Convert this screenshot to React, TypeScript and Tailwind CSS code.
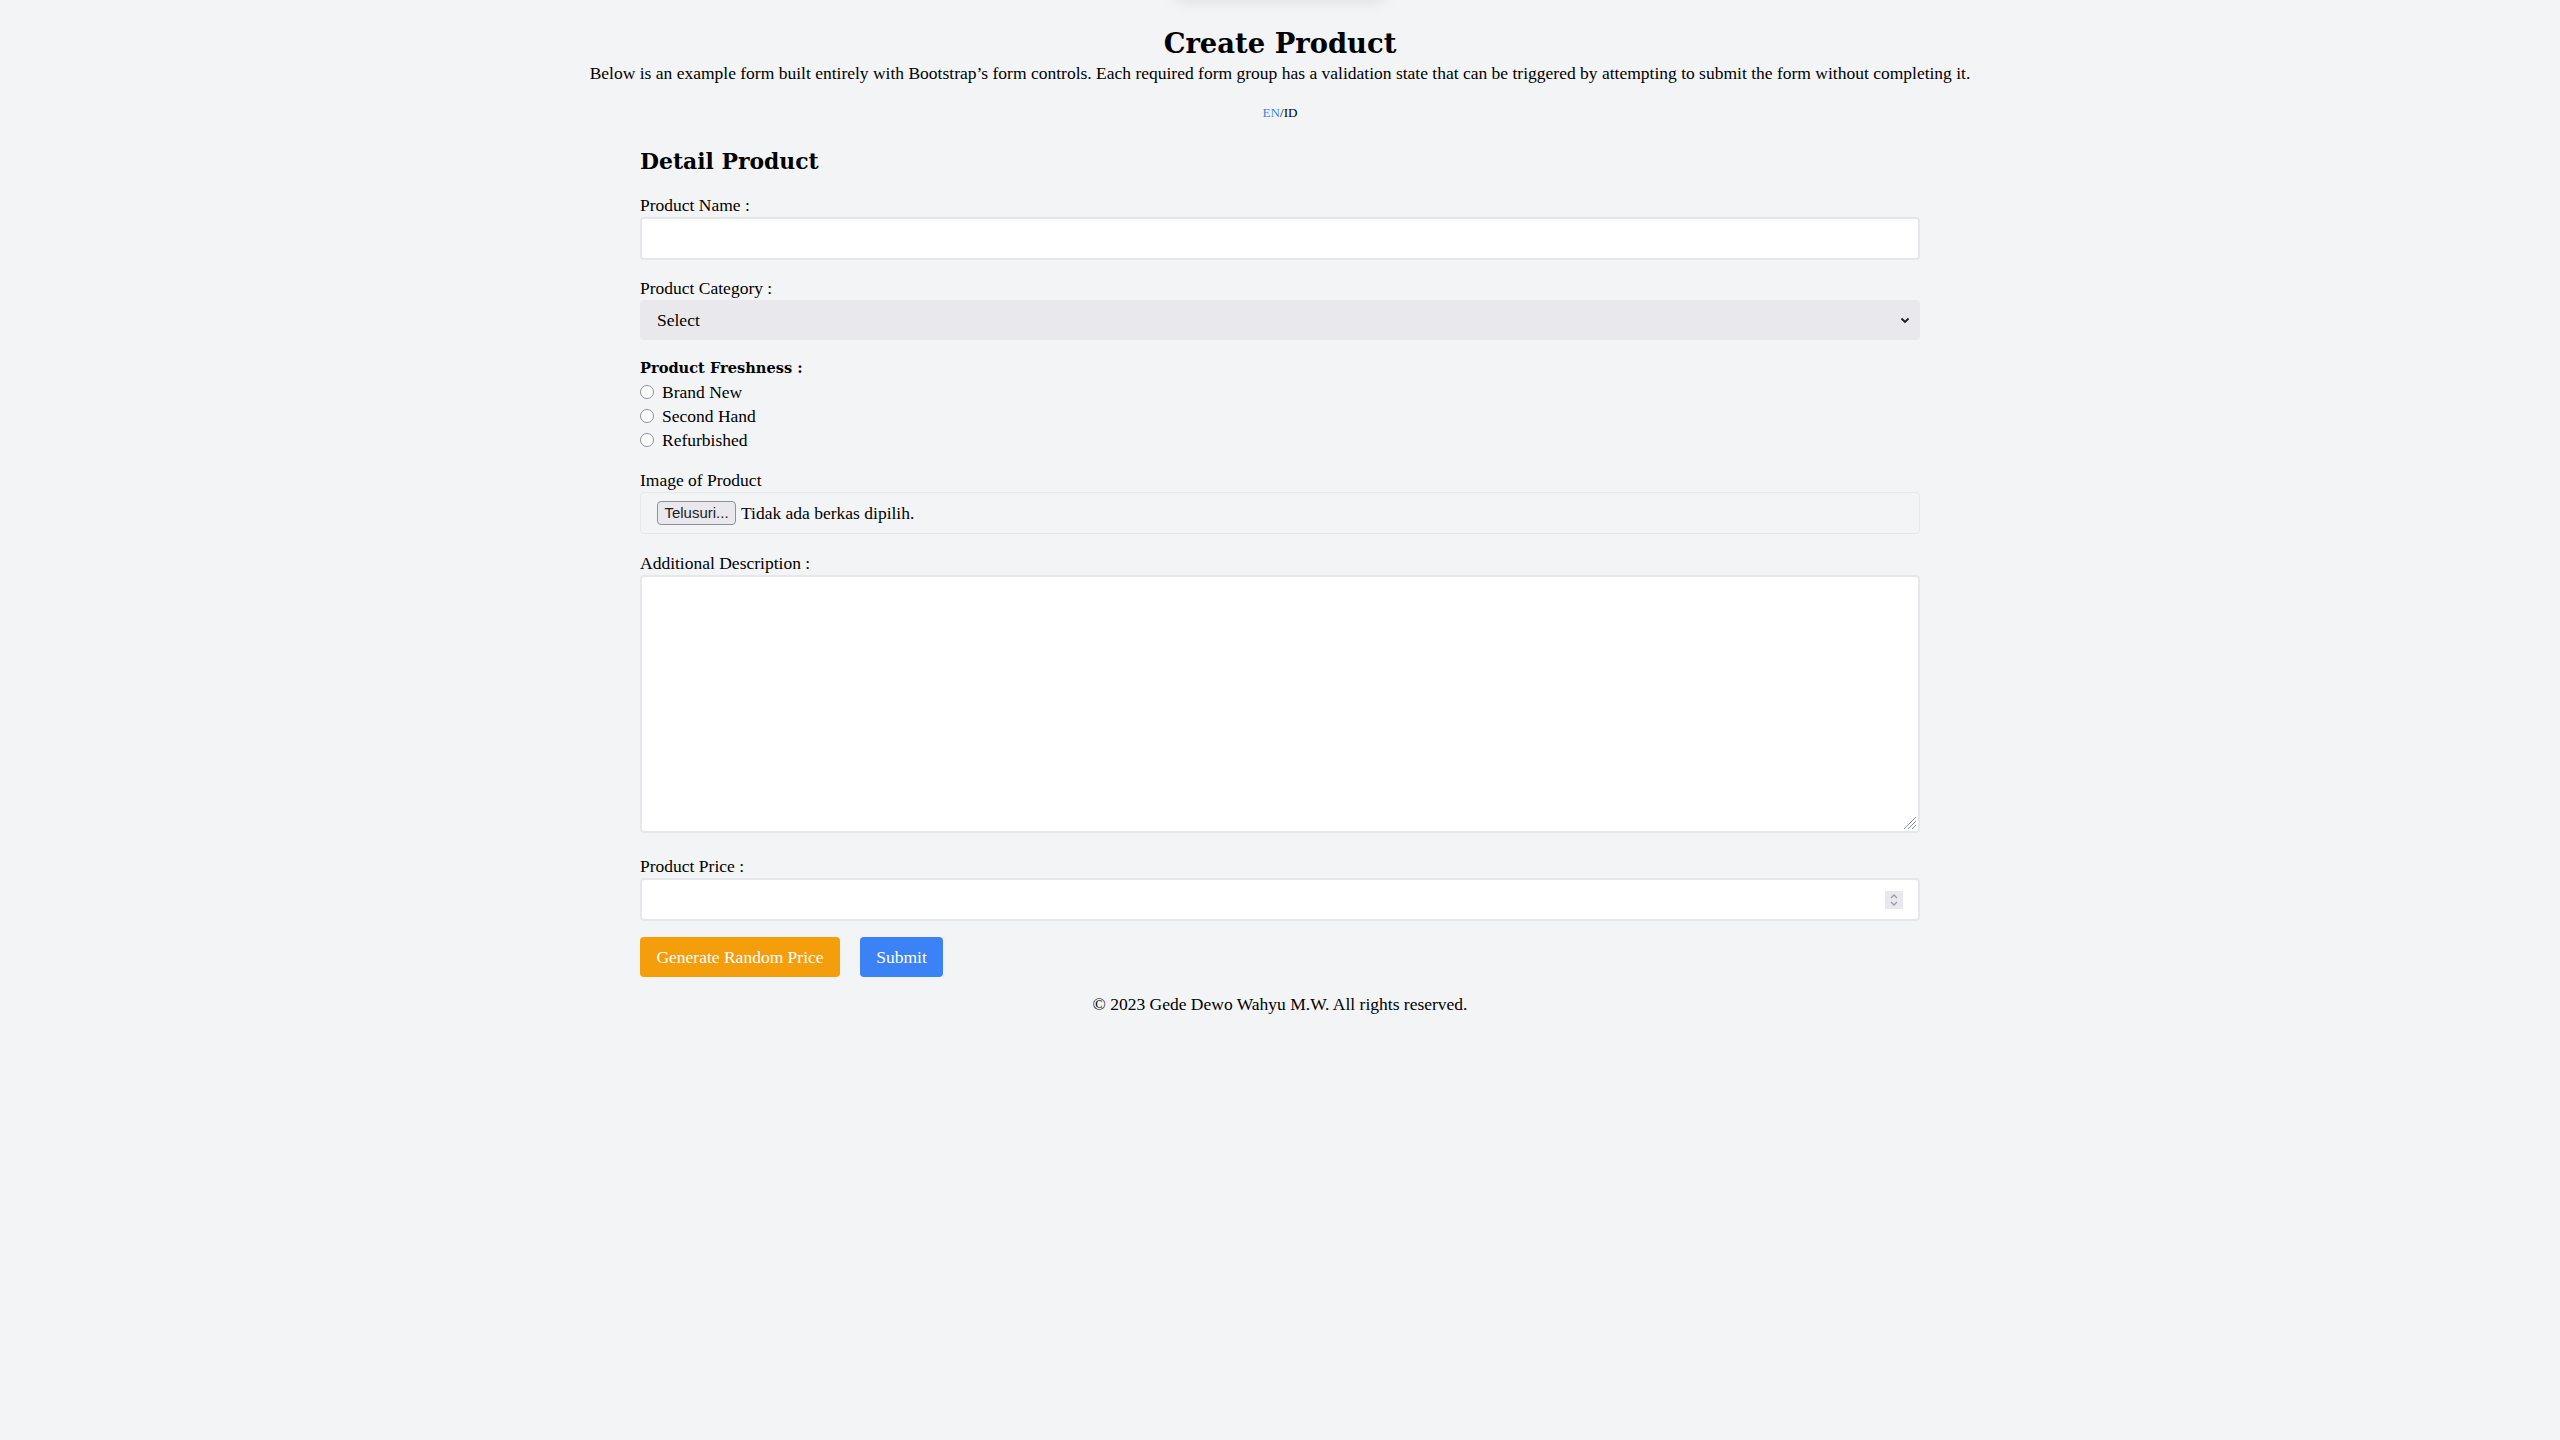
import React from 'react';

const body = "font-['Liberation_Serif',serif]";
const heading = "font-['DejaVu_Serif',serif] font-bold";

function Label({ children, bold }: { children: React.ReactNode; bold?: boolean }) {
  return (
    <div className={bold ? `${heading} text-[14.6px] leading-[24px]` : 'text-[17.5px] leading-[24px]'}>
      {children}
    </div>
  );
}

function Radio({ label }: { label: string }) {
  return (
    <label className="flex h-[24px] items-center">
      <span className="mr-[8px] h-[14px] w-[14px] rounded-full border-[1.5px] border-[#8f8f9d] bg-white" />
      <span className="text-[17.5px] leading-[24px]">{label}</span>
    </label>
  );
}

export default function App() {
  return (
    <div className={`relative min-h-screen overflow-hidden bg-[#f3f4f6] text-black ${body}`}>
      <div className="absolute left-1/2 top-[-44px] h-[44px] w-[225px] -translate-x-1/2 rounded-full bg-white shadow-[0_4px_14px_rgba(0,0,0,0.07)]" />

      <header className="pt-[25px] text-center">
        <h1 className={`${heading} text-[27.4px] leading-[36px]`}>Create Product</h1>
        <p className="text-[17.5px] leading-[24px]">
          Below is an example form built entirely with Bootstrap’s form controls. Each required form group has a
          validation state that can be triggered by attempting to submit the form without completing it.
        </p>
        <div className="mt-5 text-[13.1px] leading-[16px]">
          <a className="text-[#3b82f6]">EN</a>/<a>ID</a>
        </div>
      </header>

      <main className="mx-auto max-w-7xl">
        <h2 className={`${heading} mt-6 text-[21.9px] leading-[32px]`}>Detail Product</h2>

        <div className="mt-4">
          <Label>Product Name :</Label>
          <div className="h-[43px] w-full rounded border-2 border-[#e5e7eb] bg-white" />
        </div>

        <div className="mt-[16px]">
          <Label>Product Category :</Label>
          <div className="flex h-[40px] items-center justify-between rounded bg-[#e9e9ed] pl-[17px] pr-[9px]">
            <span className="text-[17.5px]">Select</span>
            <svg width="12" height="12" viewBox="0 0 12 12" fill="none" stroke="#1c1b22" strokeWidth="1.8">
              <path d="M2.5 4.5 6 8l3.5-3.5" />
            </svg>
          </div>
        </div>

        <div className="mt-4">
          <Label bold>Product Freshness :</Label>
          <Radio label="Brand New" />
          <Radio label="Second Hand" />
          <Radio label="Refurbished" />
        </div>

        <div className="mt-4">
          <Label>Image of Product</Label>
          <div className="flex h-[42px] items-center rounded border border-[#e5e7eb] px-4">
            <span className="flex h-[24px] w-[79px] items-center justify-center rounded-[4px] border border-[#8f8f9d] bg-[#e9e9ed] font-['Liberation_Sans',sans-serif] text-[15px] text-[#1c1b22]">
              Telusuri...
            </span>
            <span className="ml-[5px] text-[17.5px]">Tidak ada berkas dipilih.</span>
          </div>
        </div>

        <div className="mt-[17px]">
          <Label>Additional Description :</Label>
          <div className="relative h-[258px] w-full rounded border-2 border-[#e5e7eb] bg-white">
            <svg className="absolute bottom-[1px] right-[1px]" width="14" height="14" viewBox="0 0 14 14" stroke="#8f8f9d" strokeWidth="1">
              <path d="M13 1 1 13M13 5 5 13M13 9 9 13" />
            </svg>
          </div>
        </div>

        <div className="mt-[21px]">
          <Label>Product Price :</Label>
          <div className="flex h-[43px] w-full items-center justify-end rounded border-2 border-[#e5e7eb] bg-white pr-[15px]">
            <span className="flex h-[18px] w-[18px] flex-col items-center justify-center bg-[#e9e9ed]">
              <svg width="10" height="14" viewBox="0 0 10 14" fill="none" stroke="#9a9aa5" strokeWidth="1.3">
                <path d="M2 5 5 2l3 3M2 9l3 3 3-3" />
              </svg>
            </span>
          </div>
        </div>

        <div className="mt-4 flex gap-5">
          <button className="h-[40px] w-[200px] rounded bg-[#f59e0b] text-[17.5px] text-white">Generate Random Price</button>
          <button className="h-[40px] w-[83px] rounded bg-[#3b82f6] text-[17.5px] text-white">Submit</button>
        </div>
      </main>

      <footer className="mt-[15px] text-center text-[17.5px] leading-[24px]">
        © 2023 Gede Dewo Wahyu M.W. All rights reserved.
      </footer>
    </div>
  );
}
